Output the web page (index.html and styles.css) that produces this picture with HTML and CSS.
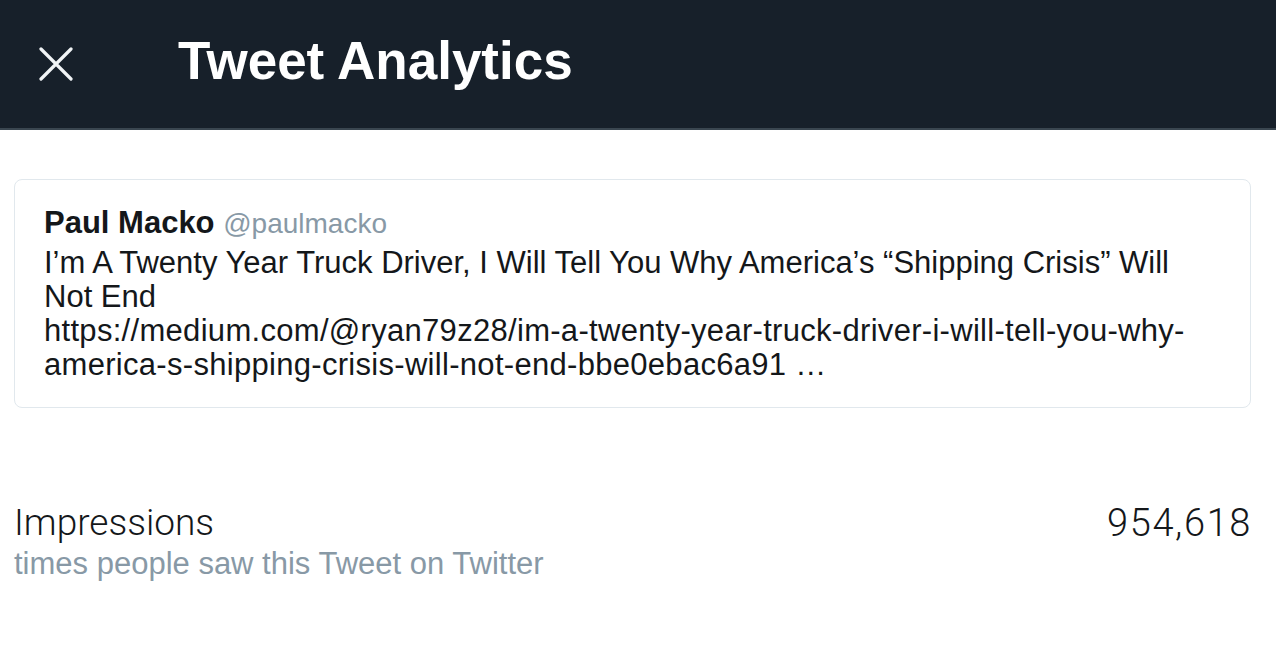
FILE: index.html
```html
<!DOCTYPE html>
<html>
<head>
<meta charset="utf-8">
<link rel="stylesheet" href="styles.css">
</head>
<body>
<header class="topbar">
  <button class="close" aria-label="Close">
    <svg width="34" height="34" viewBox="0 0 34 34"><path d="M2 2 L32 32 M32 2 L2 32" stroke="#f1f4f6" stroke-width="3.2" stroke-linecap="round" fill="none"/></svg>
  </button>
  <h1 class="title">Tweet Analytics</h1>
</header>
<main class="content">
  <div class="tweet">
    <div class="author"><span class="name">Paul Macko</span> <span class="handle">@paulmacko</span></div>
    <div class="text">I’m A Twenty Year Truck Driver, I Will Tell You Why America’s “Shipping Crisis” Will Not End<br><span class="url">https://medium.com/@ryan79z28/im-a-twenty-year-truck-driver-i-will-tell-you-why-america-s-shipping-crisis-will-not-end-bbe0ebac6a91 …</span></div>
  </div>
  <div class="metric">
    <div class="metric-label">
      <div class="metric-name">Impressions</div>
      <div class="metric-desc">times people saw this Tweet on Twitter</div>
    </div>
    <div class="metric-value">954,618</div>
  </div>
</main>
</body>
</html>
```
FILE: styles.css
```css
html, body {
  margin: 0;
  padding: 0;
  background: #ffffff;
  font-family: "Liberation Sans", Arial, sans-serif;
  color: #14171a;
}
.topbar {
  height: 128px;
  background: #17202a;
  border-bottom: 2px solid #3a4650;
  display: flex;
  align-items: center;
}
.close {
  background: none;
  border: 0;
  padding: 0;
  margin: 0 0 0 39px;
  width: 34px;
  height: 34px;
  display: flex;
  cursor: pointer;
}
.title {
  margin: 0 0 0 105px;
  color: #ffffff;
  font-size: 53px;
  font-weight: 700;
  line-height: 60px;
  position: relative;
  top: -3px;
}
.content {
  padding: 49px 25px 0 14px;
}
.tweet {
  border: 1px solid #e1e8ed;
  border-radius: 8px;
  padding: 24px 60px 25px 29px;
}
.author {
  font-size: 31px;
  line-height: 38px;
  margin-bottom: 3px;
}
.name {
  font-weight: 700;
}
.handle {
  color: #8899a6;
  font-size: 28px;
}
.text {
  font-size: 31px;
  line-height: 34px;
  word-break: break-word;
}
.url {
  letter-spacing: 0.3px;
}
.metric {
  margin-top: 94px;
  display: flex;
  justify-content: space-between;
  align-items: flex-start;
}
.metric-name {
  font-family: Roboto, "Liberation Sans", sans-serif;
  font-weight: 300;
  font-size: 37px;
  line-height: 42px;
  color: #14171a;
}
.metric-desc {
  font-size: 31px;
  line-height: 40px;
  color: #8899a6;
}
.metric-value {
  font-family: Roboto, "Liberation Sans", sans-serif;
  font-weight: 300;
  font-size: 38px;
  letter-spacing: 1.6px;
  margin-right: -1px;
  line-height: 42px;
  color: #14171a;
}
```
